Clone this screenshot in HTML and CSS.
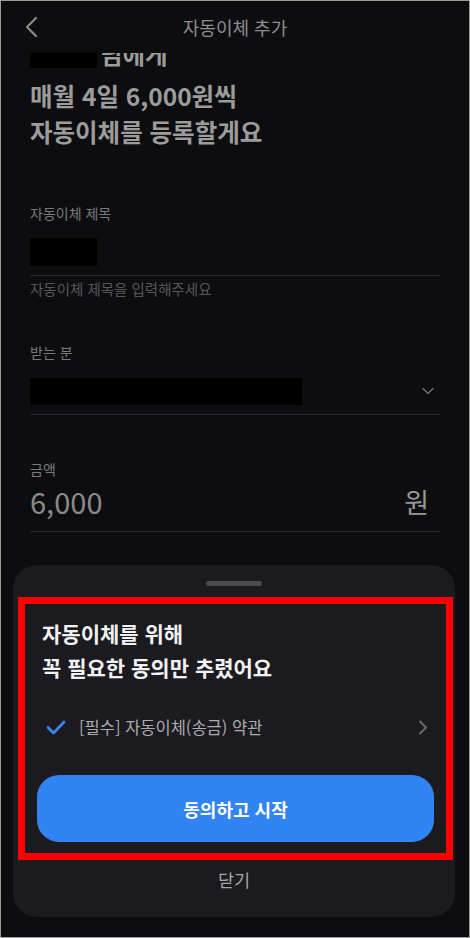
FILE: index.html
```html
<!DOCTYPE html>
<html lang="ko">
<head>
  <meta charset="utf-8">
  <title>자동이체 추가</title>
  <link rel="stylesheet" href="styles.css">
</head>
<body>
  <div class="screen">
    <header class="topbar">
      <span class="back">
        <svg width="13" height="22" viewBox="0 0 13 22"><path d="M11 2 L2 11 L11 20" fill="none" stroke="#8c8c8c" stroke-width="2.2" stroke-linecap="round" stroke-linejoin="round"/></svg>
      </span>
      <span class="title">자동이체 추가</span>
      <span></span>
    </header>

    <div class="content">
      <h1 class="headline">
        <span class="line line-first"><span class="mask mask-name"></span>님에게</span>
        <span class="line">매월 4일 6,000원씩</span>
        <span class="line">자동이체를 등록할게요</span>
      </h1>

      <div class="field field-first">
        <div class="label">자동이체 제목</div>
        <div class="input"><span class="mask mask-title"></span></div>
        <div class="hint">자동이체 제목을 입력해주세요</div>
      </div>

      <div class="field">
        <div class="label">받는 분</div>
        <div class="input">
          <span class="mask mask-account"></span>
          <svg class="caret" width="12" height="8" viewBox="0 0 12 8"><path d="M1 1.5 L6 6.5 L11 1.5" fill="none" stroke="#6a6a6e" stroke-width="1.5" stroke-linecap="round" stroke-linejoin="round"/></svg>
        </div>
      </div>

      <div class="field">
        <div class="label">금액</div>
        <div class="input amount">
          <span class="amount-value">6,000</span>
          <span class="amount-unit">원</span>
        </div>
      </div>
    </div>

    <div class="sheet">
      <div class="handle"></div>
      <div class="highlight">
        <h2 class="sheet-title">자동이체를 위해<br>꼭 필요한 동의만 추렸어요</h2>
        <div class="terms">
          <svg class="check" width="20" height="15" viewBox="0 0 20 15"><path d="M2 7.5 L7.5 13 L18 2" fill="none" stroke="#3a82f0" stroke-width="2.8" stroke-linecap="round" stroke-linejoin="round"/></svg>
          <span class="terms-text">[필수] 자동이체(송금) 약관</span>
          <svg class="arrow" width="10" height="15" viewBox="0 0 10 15"><path d="M2 1.5 L8 7.5 L2 13.5" fill="none" stroke="#67676c" stroke-width="2" stroke-linecap="round" stroke-linejoin="round"/></svg>
        </div>
        <button class="primary">동의하고 시작</button>
      </div>
      <div class="close">닫기</div>
    </div>
  </div>
</body>
</html>
```

FILE: styles.css
```css
body { margin: 0; background: #0d0d10; font-family: "Noto Sans CJK KR", "Noto Sans", sans-serif; }
.screen { width: 470px; height: 938px; box-sizing: border-box; border: 1px solid #9c9c9c; background: #0d0d10; position: relative; overflow: hidden; display: flex; flex-direction: column; }

.topbar { height: 52px; display: grid; grid-template-columns: 60px 1fr 60px; align-items: center; flex-shrink: 0; }
.back { padding-left: 24px; display: flex; align-items: center; }
.title { text-align: center; font-size: 18px; color: #8e8e8e; }

/* the headline is scrolled a little under the top bar */
.content { flex: 1; overflow: hidden; padding: 0 29px; }
.headline { margin: -17px 0 0; font-size: 24.5px; line-height: 36px; font-weight: 700; color: #9c9c9c; }
.headline .line { display: flex; align-items: center; }
.headline .line-first { margin-bottom: 6px; }
.mask { display: inline-block; background: #000; }
.mask-name { width: 67px; height: 28px; margin-right: 3px; }
.mask-title { width: 67px; height: 28px; }
.mask-account { width: 272px; height: 27px; }

.field { margin-top: 44px; }
.field-first { margin-top: 53px; }
.label { font-size: 14px; line-height: 20px; color: #7a7a7c; }
.input { height: 46px; margin-top: 6px; border-bottom: 1px solid #26262a; display: flex; align-items: center; justify-content: space-between; }
.hint { margin-top: 4px; font-size: 14.5px; line-height: 18px; color: #56565a; }
.caret { margin-right: 6px; }
.amount { height: 32px; padding-bottom: 14px; }
.amount-value { font-size: 29px; color: #8a8a8a; }
.amount-unit { font-size: 27px; color: #979797; margin-right: 11px; }

.sheet { position: absolute; left: 12px; right: 14px; bottom: 20px; background: #1b1b1f; border-radius: 24px; padding: 16px 0 25px; }
.handle { width: 56px; height: 5px; border-radius: 3px; background: #4a4a50; margin: 0 auto; }
.highlight { margin: 11px 2px 0 5px; border: 7px solid #ff0000; padding: 12px 12px 11px; }
.sheet-title { margin: 0 0 0 5px; font-size: 21px; line-height: 34px; font-weight: 700; color: #f2f2f4; }
.terms { height: 44px; margin-top: 21px; padding: 0 6px 0 9px; display: flex; align-items: center; }
.terms-text { flex: 1; margin-left: 13px; font-size: 16.5px; color: #ababb0; }
.primary { display: block; width: 100%; height: 67px; margin-top: 26px; border: none; border-radius: 22px; background: #3283f3; color: #fff; font-family: inherit; font-size: 18px; font-weight: 600; }
.close { margin-top: 8px; text-align: center; font-size: 17.5px; line-height: 24px; color: #a6a6ab; }
```
